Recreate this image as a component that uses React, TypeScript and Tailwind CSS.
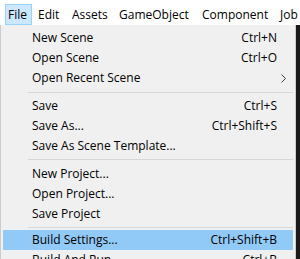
import React from 'react'

type Item = { label: string; shortcut?: string; sub?: boolean; active?: boolean } | { sep: string }

// top bar items, with the box width each one takes in the bar
const topMenus = [
  { label: 'Edit', w: 'w-[34px]' },
  { label: 'Assets', w: 'w-[47px]' },
  { label: 'GameObject', w: 'w-[83px]' },
  { label: 'Component', w: 'w-[78px]' },
  { label: 'Job', w: 'w-[30px]' },
]

const items: Item[] = [
  { label: 'New Scene', shortcut: 'Ctrl+N' },
  { label: 'Open Scene', shortcut: 'Ctrl+O' },
  { label: 'Open Recent Scene', sub: true },
  { sep: 'h-[8px] pt-[4px]' },
  { label: 'Save', shortcut: 'Ctrl+S' },
  { label: 'Save As...', shortcut: 'Ctrl+Shift+S' },
  { label: 'Save As Scene Template...' },
  { sep: 'h-[8px] pt-[3px]' },
  { label: 'New Project...' },
  { label: 'Open Project...' },
  { label: 'Save Project' },
  { sep: 'h-[6px] pt-[3px]' },
  { label: 'Build Settings...', shortcut: 'Ctrl+Shift+B', active: true },
  { label: 'Build And Run', shortcut: 'Ctrl+B' },
]

const Chevron = () => (
  <svg width="5" height="9" viewBox="0 0 5 9" className="block">
    <path d="M0.5 0.5 L4.5 4.5 L0.5 8.5" fill="none" stroke="#3c3c3c" strokeWidth="1" />
  </svg>
)

const App = () => {
  return (
    <div className="w-[300px] h-[259px] overflow-hidden bg-[#1a1a1a] text-[12px] text-black font-['Open_Sans',sans-serif] leading-none">
      {/* menu bar */}
      <div className="h-[25px] bg-white flex pt-[4px] pl-[5px] whitespace-nowrap overflow-hidden">
        <div className="h-[21px] w-[27px] shrink-0 pl-[2px] flex items-center bg-[#cce8ff] border border-[#99d1ff]">File</div>
        {topMenus.map((m) => (
          <div key={m.label} className={`h-[21px] ${m.w} shrink-0 pl-[6px] flex items-center`}>
            {m.label}
          </div>
        ))}
      </div>

      <div className="flex h-[234px]">
        {/* dropdown */}
        <div className="w-[296px] bg-[#f0f0f0] border-x border-[#cccccc] px-[2px] pt-[3px]">
          {items.map((it, i) =>
            'sep' in it ? (
              <div key={i} className={`${it.sep} pl-[25px]`}>
                <div className="h-px bg-[#d7d7d7]" />
              </div>
            ) : (
              <div
                key={i}
                className={`h-[20px] flex items-center pl-[29px] whitespace-nowrap ${it.active ? 'bg-[#91c9f7]' : ''}`}
              >
                <span className="flex-1">{it.label}</span>
                {it.shortcut && <span>{it.shortcut}</span>}
                <span className="w-[16px] pl-[4px] flex items-center">{it.sub && <Chevron />}</span>
              </div>
            ),
          )}
        </div>
        <div className="flex-1" />
      </div>
    </div>
  )
}

export default App
